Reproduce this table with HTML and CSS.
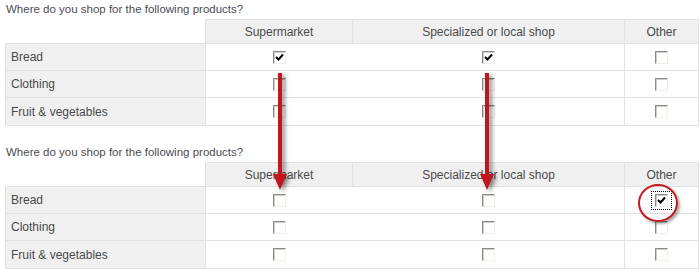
FILE: index.html
```html
<!DOCTYPE html>
<html lang="en">
<head>
<meta charset="utf-8">
<title>Array question</title>
<link rel="stylesheet" href="styles.css">
</head>
<body>
<div class="page">
  <section class="question">
    <p class="q-title">Where do you shop for the following products?</p>
    <table class="grid">
      <colgroup><col class="c-label"><col class="c-super"><col class="c-spec"><col class="c-other"></colgroup>
      <thead>
        <tr><th class="blank"></th><th>Supermarket</th><th>Specialized or local shop</th><th class="other">Other</th></tr>
      </thead>
      <tbody>
        <tr><td class="label">Bread</td><td class="check"><span class="cb checked"><svg viewBox="0 0 11 11" width="11" height="11"><polyline points="2,5 4.5,7.5 9,2.5" /></svg></span></td><td class="check"><span class="cb checked"><svg viewBox="0 0 11 11" width="11" height="11"><polyline points="2,5 4.5,7.5 9,2.5" /></svg></span></td><td class="check other"><span class="cb"></span></td></tr>
        <tr><td class="label">Clothing</td><td class="check"><span class="cb"></span></td><td class="check"><span class="cb"></span></td><td class="check other"><span class="cb"></span></td></tr>
        <tr class="last"><td class="label">Fruit &amp; vegetables</td><td class="check"><span class="cb"></span></td><td class="check"><span class="cb"></span></td><td class="check other"><span class="cb"></span></td></tr>
      </tbody>
    </table>
  </section>
  <section class="question">
    <p class="q-title">Where do you shop for the following products?</p>
    <table class="grid">
      <colgroup><col class="c-label"><col class="c-super"><col class="c-spec"><col class="c-other"></colgroup>
      <thead>
        <tr><th class="blank"></th><th>Supermarket</th><th>Specialized or local shop</th><th class="other">Other</th></tr>
      </thead>
      <tbody>
        <tr><td class="label">Bread</td><td class="check"><span class="cb"></span></td><td class="check"><span class="cb"></span></td><td class="check other"><span class="focus"><span class="cb checked"><svg viewBox="0 0 11 11" width="11" height="11"><polyline points="2,5 4.5,7.5 9,2.5" /></svg></span></span></td></tr>
        <tr><td class="label">Clothing</td><td class="check"><span class="cb"></span></td><td class="check"><span class="cb"></span></td><td class="check other"><span class="cb"></span></td></tr>
        <tr class="last"><td class="label">Fruit &amp; vegetables</td><td class="check"><span class="cb"></span></td><td class="check"><span class="cb"></span></td><td class="check other"><span class="cb"></span></td></tr>
      </tbody>
    </table>
  </section>

  <svg class="arrow arrow-1" viewBox="0 0 24 125" width="24" height="125"><rect x="8" y="2" width="4" height="102"/><polygon points="3,103 17,103 10,119"/></svg>
  <svg class="arrow arrow-2" viewBox="0 0 24 125" width="24" height="125"><rect x="8" y="2" width="4" height="102"/><polygon points="3,103 17,103 10,119"/></svg>
  <span class="ring"></span>
</div>
</body>
</html>
```
FILE: styles.css
```css
html, body {
  margin: 0;
  padding: 0;
  background: #ffffff;
}

body {
  font-family: "Liberation Sans", Arial, sans-serif;
  font-size: 12px;
  color: #4a4a4a;
}

.page {
  position: relative;
  width: 700px;
  height: 273px;
  padding-left: 5px;
  box-sizing: border-box;
}

.question + .question {
  margin-top: 18px;
}

.q-title {
  margin: 1px 0 2px;
  padding-left: 1px;
  line-height: 16px;
  font-size: 11.5px;
  color: #4c4c54;
}

.grid {
  border-collapse: collapse;
  table-layout: fixed;
  width: 693px;
}

.c-label { width: 200px; }
.c-super { width: 147px; }
.c-spec { width: 272px; }
.c-other { width: 74px; }

.grid thead tr { height: 24px; }
.grid tbody tr { height: 27px; }
.grid tbody tr.last { height: 28px; }

.grid th {
  font-weight: normal;
  background: #f0f0f0;
  border: 1px solid #e2e2e2;
  text-align: center;
  vertical-align: middle;
  padding: 0;
  color: #4a4a4a;
}

.grid th.blank {
  background: transparent;
  border: none;
}

.grid td {
  padding: 0;
  vertical-align: middle;
  border-top: 1px solid #e2e2e2;
  border-bottom: 1px solid #e2e2e2;
}

.grid td.label {
  background: #f0f0f0;
  border: 1px solid #e2e2e2;
  padding-left: 5px;
  text-align: left;
}

.grid td.check {
  text-align: center;
  line-height: 0;
}

.grid td.other {
  border-left: 1px solid #e2e2e2;
  border-right: 1px solid #e2e2e2;
}

.cb {
  display: inline-block;
  vertical-align: middle;
  box-sizing: border-box;
  width: 13px;
  height: 13px;
  background: #ffffff;
  border: 1px solid;
  border-color: #8a8a8a #efefe8 #efefe8 #8a8a8a;
  box-shadow: inset 1px 1px 0 #cfcfc8;
}

.cb svg {
  display: block;
  margin: 0;
}

.cb svg polyline {
  fill: none;
  stroke: #000000;
  stroke-width: 2;
}

.focus {
  display: inline-block;
  vertical-align: middle;
  line-height: 0;
  padding: 2px 3px;
  border: 1px dotted #000000;
}

.arrow {
  position: absolute;
  overflow: visible;
  fill: #c0161c;
  filter: drop-shadow(3px 2px 2px rgba(0, 0, 0, 0.45));
}

.arrow-1 { left: 270px; top: 70px; }
.arrow-2 { left: 477px; top: 70px; }

.ring {
  position: absolute;
  left: 638px;
  top: 183px;
  width: 40px;
  height: 38px;
  box-sizing: border-box;
  border: 2px solid #c8161e;
  border-radius: 50%;
  box-shadow: 2px 2px 3px rgba(0, 0, 0, 0.35);
}
```
